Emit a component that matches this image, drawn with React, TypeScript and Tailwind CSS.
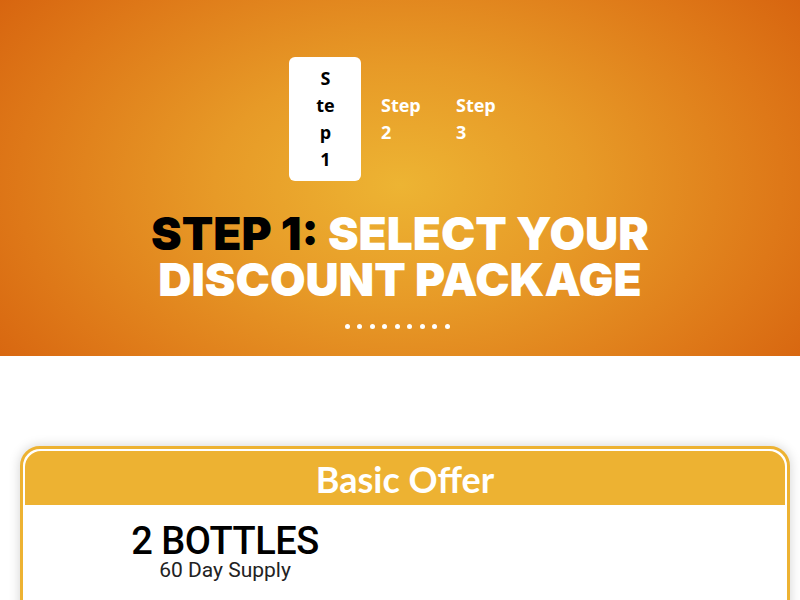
import React from "react";

export default function App() {
  const dots = Array.from({ length: 9 });
  return (
    <div className="w-[800px] h-[600px] overflow-hidden bg-white" style={{ fontFamily: "Lato, 'Open Sans', sans-serif" }}>
      <section
        className="h-[356px] flex flex-col items-center pt-[57px]"
        style={{
          background:
            "radial-gradient(ellipse 530px 340px at 400px 185px, #edb433 0%, #e79a27 35%, #de7818 72%, #d55f0d 100%)",
        }}
      >
        <div className="flex items-center" style={{ fontFamily: "'Open Sans', sans-serif" }}>
          <div className="w-[72px] h-[124px] bg-white rounded-[6px] flex flex-col items-center justify-center text-black font-bold text-[18px] leading-[27px] pl-[1px]">
            <span>S</span>
            <span>te</span>
            <span>p</span>
            <span>1</span>
          </div>
          <div className="w-[75px] pl-[20px] flex flex-col text-white font-bold text-[18px] leading-[27px]">
            <span>Step</span>
            <span>2</span>
          </div>
          <div className="w-[75px] pl-[20px] flex flex-col text-white font-bold text-[18px] leading-[27px]">
            <span>Step</span>
            <span>3</span>
          </div>
        </div>
        <h1
          className="mt-[29px] text-center text-[46px] leading-[46px] font-black uppercase text-white"
          style={{ fontFamily: "Inter, sans-serif" }}
        >
          <span className="text-black">Step 1:</span> Select your
          <br />
          Discount Package
        </h1>
        <div className="mt-[22px] flex gap-[7.5px] -ml-[6px]">
          {dots.map((_, i) => (
            <span key={i} className="w-[5px] h-[5px] rounded-full bg-white" />
          ))}
        </div>
      </section>
      <div className="pt-[90px] pl-[20px]">
        <div className="w-[770px] h-[300px] rounded-t-[20px] border-[3px] border-[#edb232] bg-white p-[2px] shadow-[0_0_12px_rgba(0,0,0,0.18)]">
          <div className="h-[54px] rounded-t-[16px] bg-[#edb232] flex items-center justify-center text-white font-bold text-[36px] pt-[2px]">
            Basic Offer
          </div>
          <div className="grid grid-cols-2">
            <div className="flex flex-col items-center pt-[17px] pl-[20px]" style={{ fontFamily: "Roboto, sans-serif" }}>
              <div className="text-[38px] leading-[38px] font-medium text-black tracking-[-0.5px]">2 BOTTLES</div>
              <div className="text-[21px] leading-[22px] text-[#222] -mt-[1px]">60 Day Supply</div>
            </div>
            <div />
          </div>
        </div>
      </div>
    </div>
  );
}
